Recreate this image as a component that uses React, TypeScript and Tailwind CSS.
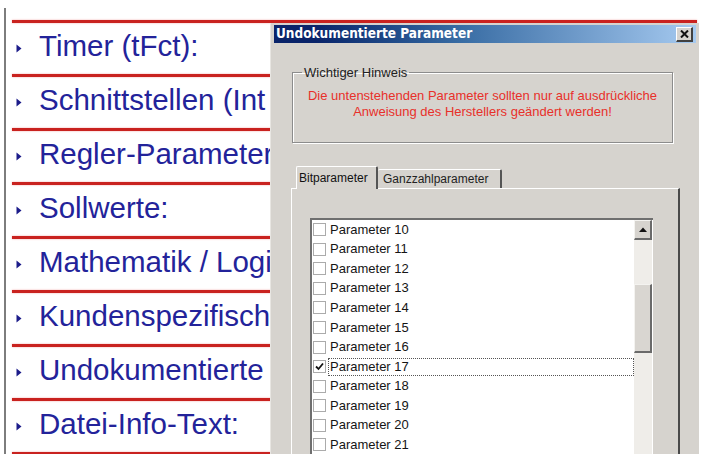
import React from "react";

// the dialog window covers the right part of each heading
const topics = [
  "Timer (tFct):",
  "Schnittstellen (Int",
  "Regler-Parameter",
  "Sollwerte:",
  "Mathematik / Logi",
  "Kundenspezifisch",
  "Undokumentierte",
  "Datei-Info-Text:",
];

const params = Array.from({ length: 12 }, (_, i) => 10 + i);

function Bullet() {
  return (
    <svg width="6" height="9" viewBox="0 0 6 9" className="shrink-0">
      <path d="M0.5 0.5 L5.5 4.5 L0.5 8.5 Z" fill="#1c1c8a" />
    </svg>
  );
}

function CheckBox({ checked }: { checked?: boolean }) {
  return (
    <div className="w-[13px] h-[13px] shrink-0 border border-[#ababab] bg-white flex items-center justify-center">
      {checked && (
        <svg width="9" height="9" viewBox="0 0 9 9">
          <path d="M1 4.5 L3.5 7 L8 1.5" fill="none" stroke="#111" strokeWidth="1.8" />
        </svg>
      )}
    </div>
  );
}

function ParamList() {
  return (
    <div className="flex border-t-2 border-l-2 border-[#6f6f6f] bg-white h-[260px] w-[343px]">
      <div className="flex-1 flex flex-col pl-[1px]">
        {params.map((n) => (
          <div key={n} className="h-[19.55px] flex items-center gap-[2px]">
            <CheckBox checked={n === 17} />
            {n === 17 ? (
              <span className="flex-1 h-[18px] flex items-center pl-[1px] text-[13px] leading-[14px] text-[#151515] border border-dotted border-[#555]">
                Parameter {n}
              </span>
            ) : (
              <span className="flex-1 pl-[2px] text-[13px] leading-[14px] text-[#151515]">Parameter {n}</span>
            )}
          </div>
        ))}
      </div>
      {/* scrollbar */}
      <div className="w-[18px] flex flex-col bg-[#efede9] mr-[1px]">
        <div className="h-[20px] bg-[#d6d3ce] border-t border-l border-[#f4f3f0] border-r-2 border-b-2 border-r-[#6a6a6a] border-b-[#6a6a6a] flex items-center justify-center">
          <svg width="8" height="5" viewBox="0 0 8 5">
            <path d="M0 5 L4 0.5 L8 5 Z" fill="#111" />
          </svg>
        </div>
        <div className="h-[44px]" />
        <div className="h-[69px] bg-[#d9d6d1] border-t border-l border-[#f4f3f0] border-r-2 border-b-2 border-r-[#6a6a6a] border-b-[#6a6a6a]" />
      </div>
    </div>
  );
}

function Dialog() {
  return (
    <div className="absolute left-[270px] top-[23px] right-[2px] bottom-[-20px] bg-[#d6d3ce] pt-[2px] px-[3px] border-l border-[#e8e6e2]">
      {/* title bar */}
      <div className="h-[18px] flex items-center justify-between pl-[2px] pr-[3px] bg-gradient-to-r from-[#0a246a] from-10% via-[#3a6ea5] via-45% to-[#a6caf0]">
        <span className="text-white font-bold text-[13.5px] leading-none font-['DejaVu_Sans_Condensed','DejaVu_Sans',sans-serif]">
          Undokumentierte Parameter
        </span>
        <div className="w-[17px] h-[15px] bg-[#d6d3ce] border-t border-l border-white border-r-2 border-b-2 border-r-[#404040] border-b-[#404040] flex items-center justify-center">
          <svg width="9" height="8" viewBox="0 0 9 8">
            <path d="M1 0.5 L8 7.5 M8 0.5 L1 7.5" stroke="#111" strokeWidth="2" />
          </svg>
        </div>
      </div>

      {/* notice group */}
      <fieldset className="ml-[18px] mt-[22px] w-[381px] h-[78px] border border-[#8c8c8c] shadow-[inset_1px_1px_0_#fff,1px_1px_0_#fff] px-[8px]">
        <legend className="ml-[1px] px-[2px] text-[13px] leading-[15px] text-[#222]">Wichtiger Hinweis</legend>
        <p className="mt-[8px] text-center text-[13px] leading-[16px] text-[#e8302a]">
          Die untenstehenden Parameter sollten nur auf ausdrückliche
          <br />
          Anweisung des Herstellers geändert werden!
        </p>
      </fieldset>

      {/* tabs */}
      <div className="ml-[17px] mt-[22px] mr-[16px]">
        <div className="flex items-end pl-[5px] h-[23px]">
          <div className="relative z-10 h-[23px] w-[82px] bg-[#d6d3ce] border-t border-l border-white border-r-2 border-r-[#555] rounded-t-[2px] flex items-center pl-[2px] text-[12px] text-[#111] mb-[-1px]">
            Bitparameter
          </div>
          <div className="h-[19px] w-[124px] bg-[#d6d3ce] border-t border-white border-r-2 border-r-[#555] rounded-t-[2px] flex items-center pl-[5px] text-[12px] text-[#222]">
            Ganzzahlparameter
          </div>
        </div>
        <div className="h-[300px] border-t border-l border-white border-r-2 border-r-[#4a4a4a] pl-[18px] pt-[29px]">
          <ParamList />
        </div>
      </div>
    </div>
  );
}

export default function App() {
  return (
    <div className="relative w-[701px] h-[454px] overflow-hidden bg-white font-['Liberation_Sans',Arial,sans-serif]">
      <div className="flex h-full pt-[8px] pl-[4px]">
        <div className="w-[2px] bg-[#7d7d7d]" />
        <div className="flex-1 pl-[6px] pt-[12px] pr-[4px]">
          {topics.map((t) => (
            <div key={t}>
              <div className="h-[3px] bg-[#c9221f] shadow-[0_0_2px_#f0a0a0]" />
              <div className="h-[51px] w-[258px] flex items-center gap-[17px] pl-[4px] whitespace-nowrap">
                <Bullet />
                <span className="text-[29.5px] leading-none text-[#23239a] pb-[6px]">{t}</span>
              </div>
            </div>
          ))}
          <div className="h-[3px] bg-[#c9221f] shadow-[0_0_2px_#f0a0a0]" />
        </div>
      </div>
      <Dialog />
    </div>
  );
}
